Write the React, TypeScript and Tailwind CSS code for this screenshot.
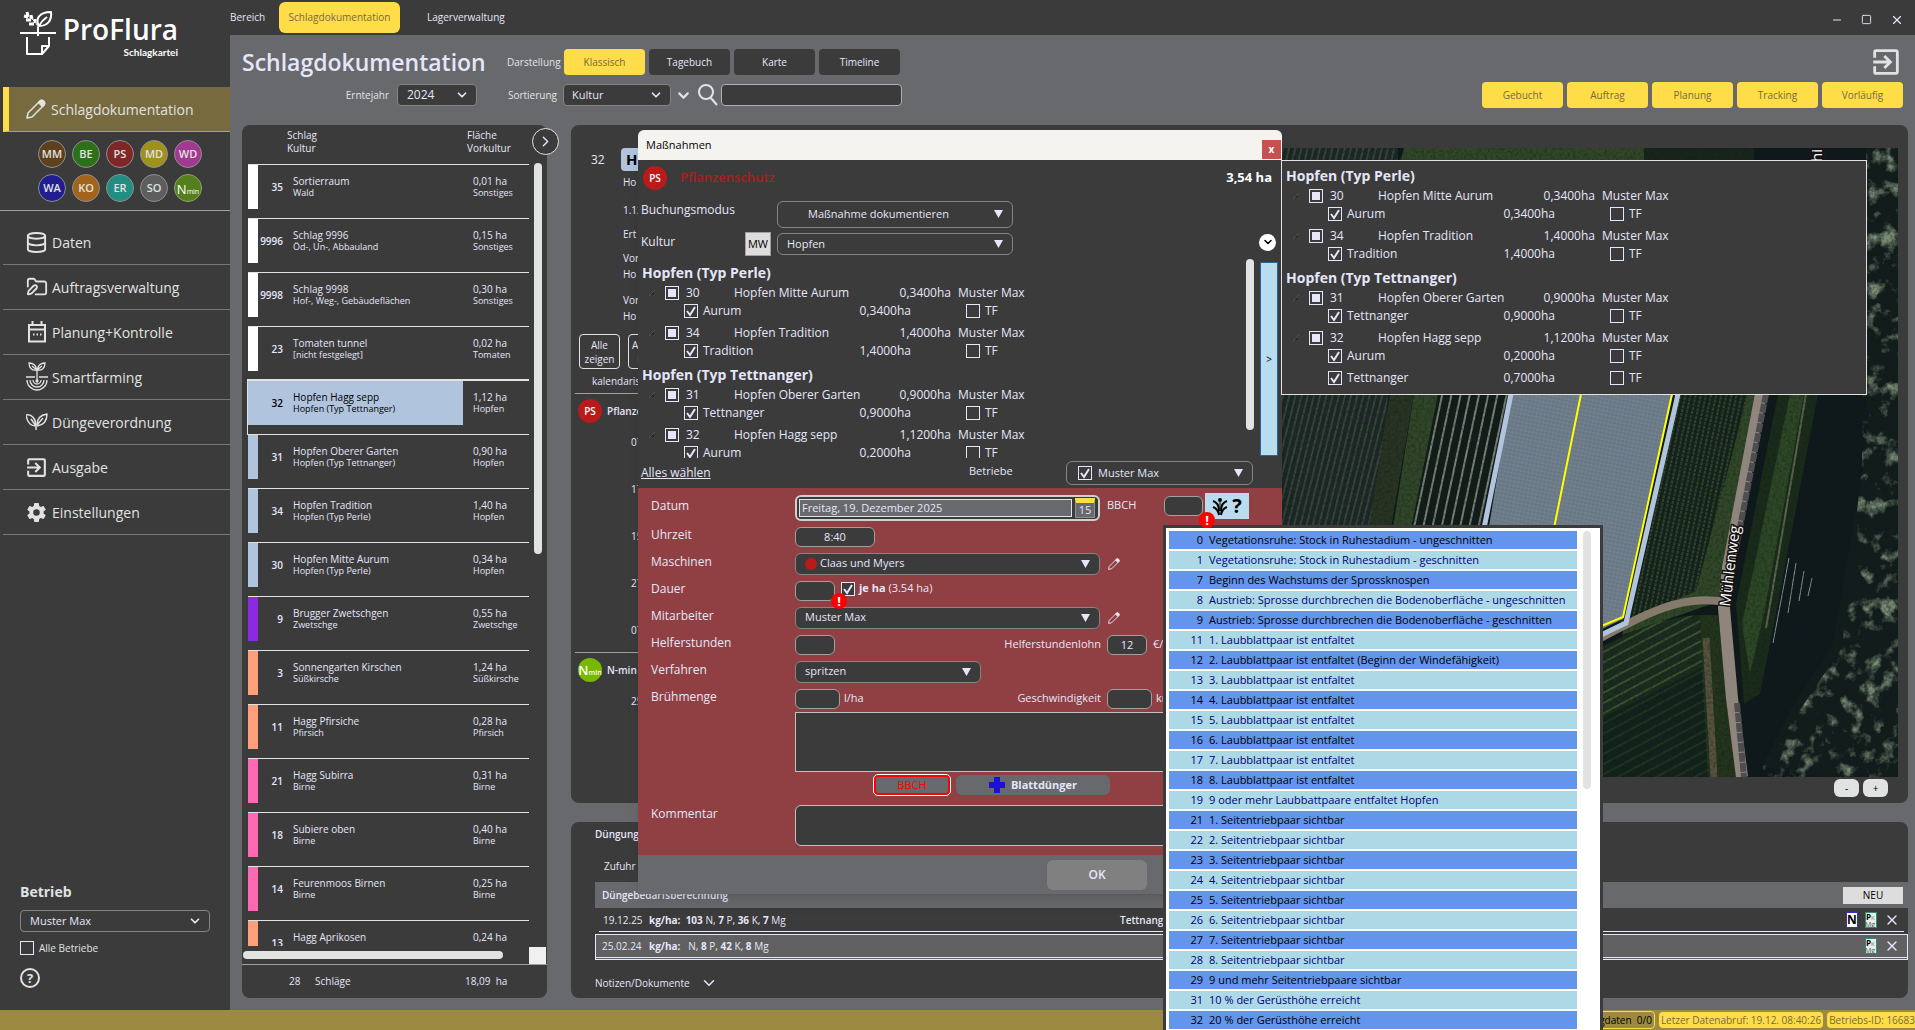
import React from 'react';
import { Database, FolderPen, ChevronDown, ChevronRight, X, Minus, Square } from 'lucide-react';
import { MdExitToApp } from 'react-icons/md';
import { IoSettingsSharp } from 'react-icons/io5';

const badges = [
  { label: 'MM', color: 'bg-[#5f401c]' },
  { label: 'BE', color: 'bg-[#2c711a]' },
  { label: 'PS', color: 'bg-[#7f2727]' },
  { label: 'MD', color: 'bg-[#9f911b]' },
  { label: 'WD', color: 'bg-[#a2388f]' },
  { label: 'WA', color: 'bg-[#231d92]' },
  { label: 'KO', color: 'bg-[#a2631a]' },
  { label: 'ER', color: 'bg-[#228d82]' },
  { label: 'SO', color: 'bg-[#5e5e5e]' },
];

const fields = [
  { id: 35, name: 'Sortierraum', crop: 'Wald', area: '0,01 ha', prev: 'Sonstiges', color: 'bg-white' },
  { id: 9996, name: 'Schlag 9996', crop: 'Öd-, Un-, Abbauland', area: '0,15 ha', prev: 'Sonstiges', color: 'bg-white' },
  { id: 9998, name: 'Schlag 9998', crop: 'Hof-, Weg-, Gebäudeflächen', area: '0,30 ha', prev: 'Sonstiges', color: 'bg-white' },
  { id: 23, name: 'Tomaten tunnel', crop: '[nicht festgelegt]', area: '0,02 ha', prev: 'Tomaten', color: 'bg-white' },
  { id: 32, name: 'Hopfen Hagg sepp', crop: 'Hopfen (Typ Tettnanger)', area: '1,12 ha', prev: 'Hopfen', color: 'bg-[#b0c4de]', selected: true },
  { id: 31, name: 'Hopfen Oberer Garten', crop: 'Hopfen (Typ Tettnanger)', area: '0,90 ha', prev: 'Hopfen', color: 'bg-[#b0c4de]' },
  { id: 34, name: 'Hopfen Tradition', crop: 'Hopfen (Typ Perle)', area: '1,40 ha', prev: 'Hopfen', color: 'bg-[#b0c4de]' },
  { id: 30, name: 'Hopfen Mitte Aurum', crop: 'Hopfen (Typ Perle)', area: '0,34 ha', prev: 'Hopfen', color: 'bg-[#b0c4de]' },
  { id: 9, name: 'Brugger Zwetschgen', crop: 'Zwetschge', area: '0,55 ha', prev: 'Zwetschge', color: 'bg-[#8a2be2]' },
  { id: 3, name: 'Sonnengarten Kirschen', crop: 'Süßkirsche', area: '1,24 ha', prev: 'Süßkirsche', color: 'bg-[#ffa07a]' },
  { id: 11, name: 'Hagg Pfirsiche', crop: 'Pfirsich', area: '0,28 ha', prev: 'Pfirsich', color: 'bg-[#ffa07a]' },
  { id: 21, name: 'Hagg Subirra', crop: 'Birne', area: '0,31 ha', prev: 'Birne', color: 'bg-[#ff69b4]' },
  { id: 18, name: 'Subiere oben', crop: 'Birne', area: '0,40 ha', prev: 'Birne', color: 'bg-[#ff69b4]' },
  { id: 14, name: 'Feurenmoos Birnen', crop: 'Birne', area: '0,25 ha', prev: 'Birne', color: 'bg-[#ff69b4]' },
  { id: 13, name: 'Hagg Aprikosen', crop: '', area: '0,24 ha', prev: '', color: 'bg-[#ffa07a]' },
];

const tree = [
  {
    title: 'Hopfen (Typ Perle)',
    plots: [
      { id: 30, name: 'Hopfen Mitte Aurum', area: '0,3400ha', parts: [['Aurum', '0,3400ha']] },
      { id: 34, name: 'Hopfen Tradition', area: '1,4000ha', parts: [['Tradition', '1,4000ha']] },
    ],
  },
  {
    title: 'Hopfen (Typ Tettnanger)',
    plots: [
      { id: 31, name: 'Hopfen Oberer Garten', area: '0,9000ha', parts: [['Tettnanger', '0,9000ha']] },
      { id: 32, name: 'Hopfen Hagg sepp', area: '1,1200ha', parts: [['Aurum', '0,2000ha'], ['Tettnanger', '0,7000ha']] },
    ],
  },
];

const stages: [number, string][] = [
  [0, 'Vegetationsruhe: Stock in Ruhestadium - ungeschnitten'],
  [1, 'Vegetationsruhe: Stock in Ruhestadium - geschnitten'],
  [7, 'Beginn des Wachstums der Sprossknospen'],
  [8, 'Austrieb: Sprosse durchbrechen die Bodenoberfläche - ungeschnitten'],
  [9, 'Austrieb: Sprosse durchbrechen die Bodenoberfläche - geschnitten'],
  [11, '1. Laubblattpaar ist entfaltet'],
  [12, '2. Laubblattpaar ist entfaltet (Beginn der Windefähigkeit)'],
  [13, '3. Laubblattpaar ist entfaltet'],
  [14, '4. Laubblattpaar ist entfaltet'],
  [15, '5. Laubblattpaar ist entfaltet'],
  [16, '6. Laubblattpaar ist entfaltet'],
  [17, '7. Laubblattpaar ist entfaltet'],
  [18, '8. Laubblattpaar ist entfaltet'],
  [19, '9 oder mehr Laubbattpaare entfaltet Hopfen'],
  [21, '1. Seitentriebpaar sichtbar'],
  [22, '2. Seitentriebpaar sichtbar'],
  [23, '3. Seitentriebpaar sichtbar'],
  [24, '4. Seitentriebpaar sichtbar'],
  [25, '5. Seitentriebpaar sichtbar'],
  [26, '6. Seitentriebpaar sichtbar'],
  [27, '7. Seitentriebpaar sichtbar'],
  [28, '8. Seitentriebpaar sichtbar'],
  [29, '9 und mehr Seitentriebpaare sichtbar'],
  [31, '10 % der Gerüsthöhe erreicht'],
  [32, '20 % der Gerüsthöhe erreicht'],
];

function Logo() {
  return (
    <svg width="36" height="44" viewBox="0 0 36 44" fill="none" stroke="white" strokeWidth="2" strokeLinejoin="round">
      <path d="M0 22h36" />
      <path d="M18 25V16" />
      <path d="M19 15c-4-7 0-14 12-14c1 8-3 14-12 14zM19 15c2-4 5-7 8-9" />
      <path d="M18 16C16 11 12 7 6 4" strokeWidth="1" />
      <path d="M7 1l1 4M4 5l4 1M11 4l1 4M6 9l5 0M15 8l0 4M9 13l5 0" strokeWidth="3" />
      <path d="M7 26v17h15l7-8v-9" />
      <path d="M22 43v-8h7" />
    </svg>
  );
}

function PencilIcon({ size }: { size: number }) {
  return (
    <svg width={size} height={size} viewBox="0 0 20 20" fill="none" stroke="currentColor" strokeWidth="1.5" strokeLinejoin="round">
      <path d="M1 19l1-5L14 2c2-2 6 1 4 4L6 18z" />
      <path d="M12.500 3.500l4 4L18 6c2-3-2-6-4-4z" fill="currentColor" />
    </svg>
  );
}

function SearchIcon() {
  return (
    <svg width="20" height="22" viewBox="0 0 20 22" fill="none" stroke="currentColor" strokeWidth="2">
      <circle cx="8" cy="8" r="7" />
      <path d="M12 13l7 8" />
    </svg>
  );
}

function CalendarIcon() {
  return (
    <svg width="20" height="22" viewBox="0 0 20 22" fill="none" stroke="currentColor" strokeWidth="2">
      <path d="M2 4h16v16.500H2zM2 8.500h16M5.500 0v4M14.500 0v4" />
      <path d="M6 13.500h1.500M9.500 13.500H11M13 13.500h1.500" />
    </svg>
  );
}

function SmartIcon() {
  return (
    <svg width="22" height="30" viewBox="0 0 22 30" fill="none" stroke="currentColor" strokeWidth="1.300">
      <path d="M11 19V8M11 8C10 3 7 1 3 1c0 5 3 8 8 7zM11 8c1-5 4-7 8-7c0 5-3 8-8 7zM11 8L6 4M11 8l5-4" />
      <path d="M0 15h9M13 15h9M1 18a10 10 0 0 0 20 0M4 18a7 7 0 0 0 14 0M7 18a4 4 0 0 0 8 0" />
      <circle cx="11" cy="19" r="1" fill="currentColor" />
    </svg>
  );
}

function LeavesIcon() {
  return (
    <svg width="22" height="18" viewBox="0 0 22 18" fill="none" stroke="currentColor" strokeWidth="1.500" strokeLinejoin="round">
      <path d="M10 17v-4C4 13 1 8 0 2c6-1 10 4 10 11" />
      <path d="M11 12c0-6 3-10 10-11c0 7-3 11-10 12M10 13L5 6M11 12l6-7" />
    </svg>
  );
}

function NminMark({ bright = false }: { bright?: boolean }) {
  return (
    <span className={`flex items-baseline justify-center rounded-full text-white ${bright ? 'h-6 w-6 bg-[#76b900] leading-6' : 'h-7 w-7 border border-[#8aa56a] bg-[#557f1c] leading-7'}`}>
      <span className="text-[13px]">N</span>
      <span className="text-[7px]">min</span>
    </span>
  );
}

interface CheckProps {
  state?: 'on' | 'off' | 'part';
  label?: string;
}

function Check({ state = 'off', label }: CheckProps) {
  return (
    <span className="relative flex h-[14px] w-[14px] shrink-0">
      <input
        type="checkbox"
        aria-label={label}
        defaultChecked={state === 'on'}
        className="h-[14px] w-[14px] appearance-none border border-[#e6e6fa] bg-[#3b3b3b]"
      />
      {state === 'on' && (
        <svg className="pointer-events-none absolute inset-0" viewBox="0 0 14 14" fill="none" stroke="#e6e6fa" strokeWidth="2">
          <path d="M3 7l3 4l5-8" />
        </svg>
      )}
      {state === 'part' && <span className="pointer-events-none absolute inset-[3px] bg-[#e6e6fa]" />}
    </span>
  );
}

interface DropdownProps {
  label: string;
  value: string;
  className: string;
  chevron?: boolean;
}

function Dropdown({ label, value, className, chevron = false }: DropdownProps) {
  return (
    <span className="relative flex shrink-0">
      <select aria-label={label} className={`appearance-none border border-[#858585] bg-[#3b3b3b] text-[#e6e6fa] ${className}`}>
        <option>{value}</option>
      </select>
      {chevron ? (
        <ChevronDown className="pointer-events-none absolute top-1 right-2 text-[#e6e6fa]" size={14} strokeWidth={3} />
      ) : (
        <svg className="pointer-events-none absolute inset-y-0 right-[10px] my-auto" width="9" height="8" viewBox="0 0 9 8">
          <path d="M0 0h9L4.500 8z" fill="#e6e6fa" />
        </svg>
      )}
    </span>
  );
}

function ErrorMark() {
  return (
    <span className="absolute -right-3 -bottom-2 z-10 flex h-4 w-4 items-center justify-center rounded-full bg-[#ff0000] text-[13px] leading-4 font-bold text-white">
      !
    </span>
  );
}

function PlotTree() {
  return (
    <div className="text-[12px] text-[#e6e6fa]">
      {tree.map((group) => (
        <section key={group.title} className="mb-[5px]">
          <h3 className="pl-1 text-[14px] leading-[22px] font-bold">{group.title}</h3>
          {group.plots.map((plot) => (
            <div key={plot.id}>
              <div className="flex h-[18px] items-center leading-[18px]">
                <span className="flex w-[27px] justify-center">
                  <svg width="6" height="6" viewBox="0 0 6 6"><path d="M6 0v6H0z" fill="#2a2a2a" stroke="#707070" strokeWidth="0.500" /></svg>
                </span>
                <label className="flex w-[69px] items-center gap-[7px]">
                  <Check state="part" />
                  {plot.id}
                </label>
                <span className="w-[137px] whitespace-nowrap">{plot.name}</span>
                <span className="w-20 text-right">{plot.area}</span>
                <span className="pl-[7px] whitespace-nowrap">Muster Max</span>
              </div>
              {plot.parts.map(([name, area]) => (
                <div key={name} className="mb-[5px] flex h-[17px] items-center pl-[46px] leading-[17px]">
                  <label className="flex w-[137px] items-center gap-[5px]">
                    <Check state="on" />
                    {name}
                  </label>
                  <span className="w-[90px] text-right">{area}</span>
                  <label className="ml-[55px] flex items-center gap-[5px]">
                    <Check />
                    TF
                  </label>
                </div>
              ))}
            </div>
          ))}
        </section>
      ))}
    </div>
  );
}

function Sidebar() {
  const items = [
    { label: 'Daten', icon: <Database size={23} strokeWidth={2} /> },
    { label: 'Auftragsverwaltung', icon: <FolderPen size={22} strokeWidth={2} /> },
    { label: 'Planung+Kontrolle', icon: <CalendarIcon /> },
    { label: 'Smartfarming', icon: <SmartIcon /> },
    { label: 'Düngeverordnung', icon: <LeavesIcon /> },
    { label: 'Ausgabe', icon: <MdExitToApp size={25} /> },
    { label: 'Einstellungen', icon: <IoSettingsSharp size={21} /> },
  ];
  return (
    <aside className="flex w-[230px] shrink-0 flex-col bg-[#3b3b3b] text-[#e0e3e1]">
      <div className="flex h-[87px] items-start pt-[11px] pl-5 text-white">
        <Logo />
        <div className="flex w-[122px] flex-col items-end">
          <span className="text-[28px] leading-[36px] font-semibold">ProFlura</span>
          <span className="font-['Lato'] text-[10px] leading-[10px] font-bold">Schlagkartei</span>
        </div>
      </div>
      <a href="#doku" className="ml-[3px] flex h-[45px] items-center border-b border-l-[6px] border-b-[#a0a0a0] border-l-[#fedd48] bg-[#776a3f] pl-[17px] text-[14px]">
        <span className="w-[25px]"><PencilIcon size={20} /></span>
        Schlagdokumentation
      </a>
      <div className="flex h-[79px] flex-wrap content-center gap-x-[6px] gap-y-[6px] border-b border-[#a0a0a0] pl-[38px]">
        {badges.map((b) => (
          <button key={b.label} className={`h-7 w-7 rounded-full border border-[#8f8f8f] text-[11px] font-semibold ${b.color}`}>{b.label}</button>
        ))}
        <button aria-label="N-min"><NminMark /></button>
      </div>
      <nav className="ml-[3px] pt-[9px]">
        {items.map((item) => (
          <a key={item.label} href={`#${item.label}`} className="flex h-[45px] items-center gap-[2px] border-b border-[#777777] pl-[20px] text-[14px]">
            <span className="flex w-[27px] justify-center">{item.icon}</span>
            {item.label}
          </a>
        ))}
      </nav>
      <div className="mt-auto flex flex-col items-start pb-[22px] pl-5">
        <h2 className="mb-2 text-[14px] leading-5 font-bold">Betrieb</h2>
        <Dropdown label="Betrieb" value="Muster Max" chevron className="h-[22px] w-[190px] rounded px-[9px] text-[11px]" />
        <label className="mt-2 flex items-center gap-[5px] text-[10px] leading-4">
          <Check />
          Alle Betriebe
        </label>
        <button aria-label="Hilfe" className="mt-3 flex h-5 w-5 items-center justify-center rounded-full border-2 border-[#e0e3e1] text-[13px] leading-none font-bold">?</button>
      </div>
    </aside>
  );
}

function TopBar() {
  return (
    <header className="flex h-[35px] shrink-0 items-center bg-[#3b3b3b] text-[10px] text-[#e6e6fa]">
      <span className="w-[49px]">Bereich</span>
      <button className="h-[31px] w-[121px] rounded-md bg-[#fedd48] text-[#776a3f]">Schlagdokumentation</button>
      <button className="ml-[27px]">Lagerverwaltung</button>
      <div className="ml-auto flex items-center gap-[18px] pt-1 pr-[11px]">
        <button aria-label="Minimieren"><Minus size={12} /></button>
        <button aria-label="Maximieren"><Square size={11} /></button>
        <button aria-label="Schließen"><X size={14} /></button>
      </div>
    </header>
  );
}

function Toolbar() {
  return (
    <div className="flex h-[90px] shrink-0 justify-between pl-3 text-[10px] text-[#e0e3e1]">
      <div className="pt-[11px]">
        <div className="flex h-8 items-center">
          <h1 className="w-[265px] text-[23px] leading-8 font-semibold text-[#e6e6fa]">Schlagdokumentation</h1>
          <span className="w-[57px]">Darstellung</span>
          <div className="flex gap-1">
            <button className="h-[26px] w-[81px] rounded bg-[#fedd48] text-[#776a3f]">Klassisch</button>
            {['Tagebuch', 'Karte', 'Timeline'].map((view) => (
              <button key={view} className="h-[26px] w-[81px] rounded bg-[#3b3b3b] text-[#e6e6fa]">{view}</button>
            ))}
          </div>
        </div>
        <div className="mt-[6px] flex h-[22px] items-center">
          <span className="w-[155px] pr-2 text-right">Erntejahr</span>
          <Dropdown label="Erntejahr" value="2024" chevron className="h-[22px] w-20 rounded px-[9px] text-[12px]" />
          <span className="w-[86px] pr-[6px] text-right">Sortierung</span>
          <Dropdown label="Sortierung" value="Kultur" chevron className="h-[22px] w-[108px] rounded px-2 text-[11px]" />
          <button aria-label="Aufklappen" className="ml-1"><ChevronDown size={17} strokeWidth={3} /></button>
          <span className="mr-[3px] ml-[6px]"><SearchIcon /></span>
          <input aria-label="Suche" className="h-[22px] w-[181px] rounded border border-[#b0b0b0] bg-[#3b3b3b]" />
        </div>
      </div>
      <div className="flex flex-col items-end pt-[10px] pr-3">
        <button aria-label="Abmelden"><MdExitToApp size={34} /></button>
        <div className="mt-[3px] flex gap-1">
          {['Gebucht', 'Auftrag', 'Planung', 'Tracking', 'Vorläufig'].map((filter) => (
            <button key={filter} className="h-[26px] w-[81px] rounded bg-[#fedd48] text-[#776a3f]">{filter}</button>
          ))}
        </div>
      </div>
    </div>
  );
}

function FieldList() {
  return (
    <section className="relative flex w-[305px] shrink-0 flex-col rounded-lg bg-[#3b3b3b] text-[10px] text-[#e6e6fa]">
      <div className="flex min-h-0 flex-1">
        <div className="min-h-0 overflow-hidden pl-[6px]">
          <table className="w-[281px] table-fixed border-separate border-spacing-0">
            <thead>
              <tr className="h-[39px] text-left align-top leading-[13px]">
                <th className="w-[10px]" />
                <th className="w-[25px]" />
                <th className="w-[180px] pt-1 pl-1 font-normal">Schlag<br />Kultur</th>
                <th className="w-[66px] pt-1 pl-1 font-normal">Fläche<br />Vorkultur</th>
              </tr>
            </thead>
            <tbody>
              {fields.map((f) => {
                const box = f.selected ? 'bg-[#b0c4de] text-black' : '';
                return (
                  <tr key={f.id} className={`h-[54px] align-top leading-3 ${f.selected ? 'outline outline-[#e0e3e1]' : ''}`}>
                    <td className="border-t border-[#e0e3e1] p-0"><div className={`h-[44px] ${f.color}`} /></td>
                    <td className="border-t border-[#e0e3e1] p-0">
                      <div className={`flex h-[44px] items-center justify-end font-semibold ${box}`}>{f.id}</div>
                    </td>
                    <td className="border-t border-[#e0e3e1] p-0">
                      <div className={`flex h-[44px] flex-col justify-center pl-[10px] whitespace-nowrap ${box}`}>
                        <span className="h-3 font-medium">{f.name}</span>
                        <span className="h-3 text-[9px]">{f.crop}</span>
                      </div>
                    </td>
                    <td className="border-t border-[#e0e3e1] p-0">
                      <div className="flex h-[44px] flex-col justify-center pl-[10px]">
                        <span className="h-3">{f.area}</span>
                        <span className="h-3 text-[9px]">{f.prev}</span>
                      </div>
                    </td>
                  </tr>
                );
              })}
            </tbody>
          </table>
        </div>
        <div className="mt-[38px] ml-[5px] h-[391px] w-2 rounded bg-[#e0e3e1]" />
      </div>
      <div className="flex h-[18px] items-center justify-between pr-px pl-px">
        <div className="h-2 w-[260px] rounded bg-[#e0e3e1]" />
        <div className="h-[17px] w-[17px] bg-[#f0f0f0]" />
      </div>
      <div className="flex h-[34px] items-center border-t border-[#a0a0a0] pl-[47px]">
        <span className="w-[26px]">28</span>
        <span className="w-[150px]">Schläge</span>
        <span className="whitespace-pre">18,09  ha</span>
      </div>
      <button aria-label="Liste einklappen" className="absolute top-[3px] -right-3 flex h-[27px] w-[27px] items-center justify-center rounded-full border border-[#e0e3e1] bg-[#3b3b3b]">
        <ChevronRight size={17} strokeWidth={2} />
      </button>
    </section>
  );
}

// Aerial view of the selected field with its outline and the sub-plot lines
function FieldMap() {
  return (
    <svg className="h-full w-full" viewBox="0 0 616 629" preserveAspectRatio="xMidYMid slice">
      <defs>
        <filter id="grain" x="0" y="0" width="100%" height="100%">
          <feTurbulence type="fractalNoise" baseFrequency="0.35" numOctaves="3" seed="4" />
          <feColorMatrix values="0 0 0 0 0  0 0 0 0 0.02  0 0 0 0 0  1.800 0 0 0 -0.700" />
        </filter>
        <filter id="leaves" x="0" y="0" width="100%" height="100%">
          <feTurbulence type="fractalNoise" baseFrequency="0.06" numOctaves="5" seed="9" />
          <feColorMatrix values="0 0 0 0 0.200  0 0 0 0 0.260  0 0 0 0 0.190  4 0 0 0 -2.100" />
          <feComposite in2="SourceGraphic" operator="in" />
        </filter>
        <pattern id="rows" width="6" height="6" patternUnits="userSpaceOnUse" patternTransform="rotate(14)">
          <rect width="6" height="6" fill="#1f2728" />
          <path d="M1 0v6" stroke="#39433f" strokeWidth="2" />
        </pattern>
        <pattern id="wideRows" width="9" height="9" patternUnits="userSpaceOnUse" patternTransform="rotate(12)">
          <rect width="9" height="9" fill="#151b1c" />
          <path d="M1 0v9" stroke="#7b827b" strokeWidth="2" />
        </pattern>
        <pattern id="vine" width="5" height="4" patternUnits="userSpaceOnUse" patternTransform="rotate(12)">
          <rect width="5" height="4" fill="#17211f" />
          <path d="M1 0v3" stroke="#33452f" strokeWidth="2" />
        </pattern>
        <pattern id="hops" width="4" height="4" patternUnits="userSpaceOnUse" patternTransform="rotate(12)">
          <rect width="4" height="4" fill="#687785" />
          <path d="M0 0v4M0 2h4" stroke="#76848f" strokeWidth="1" />
        </pattern>
        <pattern id="green" width="8" height="9" patternUnits="userSpaceOnUse" patternTransform="rotate(-28)">
          <rect width="8" height="9" fill="#1d2b21" />
          <path d="M0 2h8" stroke="#3b5232" strokeWidth="2" />
        </pattern>
      </defs>
      <rect width="616" height="629" fill="#11171e" />
      <path d="M0 0h116L90 629H0z" fill="url(#rows)" />
      <path d="M122 0h240v14H118zM132 246h26l-26 140h-22z" fill="#33452b" />
      <path d="M108 246h24l-24 140H86z" fill="#2b3226" />
      <path d="M362 0h110v14H362z" fill="#1a231f" />
      <path d="M156 246h74l-28 140h-74z" fill="url(#wideRows)" />
      <path d="M396 246h80l-40 200l-100 35z" fill="url(#vine)" />
      <path d="M466 246h12l-34 205l-104 36l4-14l70-30z" fill="#33462b" />
      <path d="M300 510c40-22 70-40 118-43l14 162H300z" fill="url(#green)" />
      <path d="M300 580l120-60l6 109H300z" fill="#0f1a1e" opacity="0.550" />
      <path d="M418 467h18l20 162h-30z" fill="#25331f" />
      <path d="M424 490l8 139" stroke="#5a5240" strokeWidth="7" />
      <path d="M496 246h40l-46 240l-12 60l-16 10l-8-100z" fill="#1c2a1d" />
      <path d="M508 246h14l-40 220l-14 60l-8-50z" fill="#2f4628" />
      <path d="M524 246L484 480" stroke="#5d6552" strokeWidth="2" fill="none" />
      <path d="M507 410l-16 85M514 415l-8 50M522 423l-5 30M530 430l-4 18" stroke="#8c959c" strokeWidth="1" />
      <path d="M584 0h32v629H540l-60-10l30-60l40-60l35-200z" fill="#18201f" opacity="0.500" />
      <path d="M584 0h32v629H474l46-70l40-60l20-180z" fill="#fff" filter="url(#leaves)" />
      <path d="M0 0h616v629H0z" fill="#000" filter="url(#grain)" opacity="0.500" />
      <path d="M229 246h162l-50 225l-21 10H190z" fill="url(#hops)" />
      <path d="M479 246L446 420L442 460L450 550L460 629" stroke="#8f857c" strokeWidth="12" fill="none" />
      <path d="M484 246L453 405M455 555L462 629" stroke="#4e4e51" strokeWidth="6" strokeDasharray="9 1" fill="none" />
      <path d="M444 454C400 446 370 462 300 500" stroke="#857a6c" strokeWidth="8" fill="none" />
      <path d="M229 246L190 440M396 246L344 475L300 496" stroke="#b0c4de" strokeWidth="5" fill="none" />
      <path d="M299 246L262 430M390 246L341 469L310 482" stroke="#ffff00" strokeWidth="2" fill="none" />
      <rect x="526" y="0" width="18" height="14" fill="#15171b" />
      <g fontSize="15" fill="#fff" stroke="#111" strokeWidth="3" paintOrder="stroke">
        <text transform="translate(540 14) rotate(-90)">hi</text>
        <text transform="translate(448 459) rotate(-83)">Mühlenweg</text>
      </g>
    </svg>
  );
}

function FieldDetails() {
  const booked = ['07.', '17.', '15.', '27.', '07.'];
  return (
    <section className="flex min-h-0 flex-1 rounded-lg bg-[#3b3b3b] text-[10px] leading-4 text-[#e6e6fa]">
      <div className="flex w-[711px] shrink-0 flex-col pt-[23px]">
        <div className="flex h-[23px] items-center pl-5">
          <span className="w-[30px] text-[12px]">32</span>
          <span className="rounded bg-[#b0c4de] px-[5px] text-[15px] leading-[23px] font-bold text-black">H</span>
        </div>
        <div className="flex flex-col pt-[3px] pl-[52px]">
          <span>Ho</span>
          <span className="mt-3">1.12</span>
          <span className="mt-2">Ert</span>
          <span className="mt-2">Vor</span>
          <span>Ho</span>
          <span className="mt-[10px]">Vor</span>
          <span>Ho</span>
        </div>
        <div className="mt-[10px] flex gap-2 pl-2 leading-[14px]">
          <button className="h-[35px] w-[41px] rounded border border-[#e0e3e1]">Alle zeigen</button>
          <button className="h-[35px] w-[41px] rounded border border-[#e0e3e1] pl-[3px] text-left">A<br />&nbsp; B</button>
        </div>
        <span className="mt-1 pl-[21px]">kalendaris</span>
        <div className="mt-1 ml-1 flex h-[35px] items-center gap-[5px] border-t border-[#a0a0a0] pl-[3px] font-semibold">
          <span className="flex h-6 w-6 items-center justify-center rounded-full bg-[#bb1a1a] text-white">PS</span>
          Pflanze
        </div>
        <div className="flex flex-col gap-[31px] pt-[6px] pl-[60px]">
          {booked.map((date, index) => (
            <span key={index}>{date}</span>
          ))}
        </div>
        <div className="mt-[14px] ml-1 flex h-[35px] items-center gap-[5px] border-t border-[#a0a0a0] pl-[3px] font-semibold">
          <NminMark bright />
          N-min
        </div>
        <span className="pt-[6px] pl-[60px]">25.</span>
      </div>
      <div className="flex min-w-0 flex-1 flex-col pt-[23px] pr-[10px]">
        <div className="min-h-0 flex-1"><FieldMap /></div>
        <div className="flex h-[26px] justify-end gap-1 pt-[2px] pr-[10px] text-black">
          <button className="h-[18px] w-[25px] rounded-md bg-[#e0e3e1] leading-4">-</button>
          <button className="h-[18px] w-[25px] rounded-md bg-[#e0e3e1] leading-4">+</button>
        </div>
      </div>
    </section>
  );
}

function PkIcon() {
  return (
    <svg width="12" height="16" viewBox="0 0 12 16">
      <rect width="12" height="16" fill="#2c9071" />
      <rect x="1" y="1" width="10" height="14" fill="#e6efe9" />
      <text x="1" y="8" fontSize="8" fontWeight="700">P</text>
      <text x="6" y="8" fontSize="6" fill="#777">K</text>
      <text x="0" y="15" fontSize="7" fill="#555">Mg</text>
    </svg>
  );
}

function Fertilizing() {
  return (
    <section className="flex h-[176px] shrink-0 flex-col rounded-lg bg-[#3b3b3b] pl-6 text-[10px] leading-4 text-[#e6e6fa]">
      <span className="mt-1 font-semibold">Düngung</span>
      <span className="mt-4 pl-[9px]">Zufuhr -</span>
      <div className="mt-2 flex h-[26px] shrink-0 items-center justify-between bg-[#68696d] pr-[5px] pl-[7px] font-semibold">
        Düngebedarfsberechnung
        <button className="h-[17px] w-[60px] bg-[#dddddd] font-normal text-black">NEU</button>
      </div>
      <div className="mr-1 ml-1 flex h-[24px] shrink-0 items-center border-b border-[#e6e6fa] pl-1">
        <span className="w-[46px]">19.12.25</span>
        <span className="w-[471px]"><b>kg/ha:</b> &nbsp;<b>103</b> N, <b>7</b> P, <b>36</b> K, <b>7</b> Mg</span>
        <span className="font-semibold">Tettnange</span>
        <span className="mr-1 ml-auto flex items-center gap-[7px]">
          <svg width="12" height="16" viewBox="0 0 12 16">
            <rect width="12" height="16" fill="#3a30c0" />
            <rect x="1" y="1" width="10" height="14" fill="#fff" />
            <text x="1" y="12" fontSize="12" fontWeight="700">N</text>
          </svg>
          <PkIcon />
          <button aria-label="Löschen"><X size={16} /></button>
        </span>
      </div>
      <div className="mt-[2px] flex h-[26px] shrink-0 items-center border border-b-[3px] border-double border-[#e6e6fa] bg-[#606060] pl-[6px]">
        <span className="w-[47px]">25.02.24</span>
        <span><b>kg/ha:</b> &nbsp; N, <b>8</b> P, <b>42</b> K, <b>8</b> Mg</span>
        <span className="mr-[7px] ml-auto flex items-center gap-[7px]">
          <PkIcon />
          <button aria-label="Löschen"><X size={16} /></button>
        </span>
      </div>
      <button className="mt-[14px] flex items-center gap-[10px] font-medium">
        Notizen/Dokumente
        <ChevronDown size={18} />
      </button>
    </section>
  );
}

function StatusBar() {
  return (
    <footer className="flex h-5 shrink-0 items-center justify-end gap-1 overflow-hidden bg-[#9b8a3f] text-[10px] whitespace-nowrap">
      <span className="rounded-sm border border-[#fedd48] px-[2px] leading-4 text-black">Logdaten&nbsp; 0/0</span>
      <span className="rounded-sm bg-[#fedd48] px-[2px] leading-4 text-[#776a3f]">Letzer Datenabruf: 19.12. 08:40:26</span>
      <span className="rounded-l-sm bg-[#fedd48] pl-[2px] leading-4 text-[#776a3f]">Betriebs-ID: 16683</span>
    </footer>
  );
}

const inputStyle = 'rounded-md border border-[#a0a0a0] bg-[#3b3b3b] text-center text-[#e6e6fa]';

interface RowProps {
  label: string;
  children: React.ReactNode;
}

function Row({ label, children }: RowProps) {
  return (
    <div className="flex h-[27px] items-center">
      <span className="w-36 shrink-0 pb-1 text-[12px]">{label}</span>
      {children}
    </div>
  );
}

function MeasureForm() {
  return (
    <form className="h-[367px] bg-[#904042] pt-[6px] pl-[13px] text-[11px] text-[#e6e6fa]">
      <div className="mb-[2px]">
        <Row label="Datum">
          <div className="flex h-[26px] w-[305px] items-center gap-[3px] rounded-md border-2 border-[#d0d0d0] bg-[#3b3b3b] px-[2px]">
            <input aria-label="Datum" defaultValue="Freitag, 19. Dezember 2025" className="h-[18px] w-[273px] border border-[#e0e3e1] bg-[#68696d] px-[2px]" />
            <button type="button" aria-label="Kalender" className="h-5 w-5 border border-[#909090] border-t-[5px] border-t-[#fedd48] bg-[#68696d] leading-[13px]">15</button>
          </div>
          <span className="w-16 pb-1 pl-[7px]">BBCH</span>
          <span className="relative flex pb-1">
            <input aria-label="BBCH" className={`h-5 w-[39px] ${inputStyle}`} />
            <ErrorMark />
          </span>
          <button type="button" aria-label="Stadium suchen" className="mb-1 ml-[2px] flex h-[26px] w-11 items-center justify-center gap-1 bg-[#b9dcee] text-black">
            <svg width="16" height="20" viewBox="0 0 16 20" fill="none" stroke="black" strokeWidth="2">
              <path d="M8 18V6" strokeWidth="1" />
              <path d="M7 19C6 14 4 12 1 11M9 19c1-5 3-7 6-8M7 15C7 9 4 6 1 5M9 15c0-6 3-9 6-10" />
              <circle cx="8" cy="4" r="2" fill="black" stroke="none" />
            </svg>
            <span className="text-[20px] leading-none font-bold">?</span>
          </button>
        </Row>
      </div>
      <Row label="Uhrzeit">
        <input aria-label="Uhrzeit" defaultValue="8:40" className={`h-5 w-20 ${inputStyle}`} />
      </Row>
      <Row label="Maschinen">
        <span className="relative flex">
          <Dropdown label="Maschinen" value="Claas und Myers" className="h-[22px] w-[305px] rounded-md pl-6" />
          <span className="pointer-events-none absolute top-[5px] left-[10px] h-3 w-3 rounded-full bg-[#bb1a1a]" />
        </span>
        <button type="button" aria-label="Maschinen bearbeiten" className="ml-2"><PencilIcon size={12} /></button>
      </Row>
      <Row label="Dauer">
        <span className="relative flex">
          <input aria-label="Dauer" className={`h-5 w-10 ${inputStyle}`} />
          <ErrorMark />
        </span>
        <label className="flex items-center gap-1 pb-1 pl-[6px]">
          <Check state="on" />
          <span><b>je ha</b> (3.54 ha)</span>
        </label>
      </Row>
      <Row label="Mitarbeiter">
        <Dropdown label="Mitarbeiter" value="Muster Max" className="h-[22px] w-[305px] rounded-md pl-[9px]" />
        <button type="button" aria-label="Mitarbeiter bearbeiten" className="ml-2"><PencilIcon size={12} /></button>
      </Row>
      <Row label="Helferstunden">
        <input aria-label="Helferstunden" className={`h-5 w-10 ${inputStyle}`} />
        <span className="w-[272px] pr-[6px] text-right">Helferstundenlohn</span>
        <input aria-label="Helferstundenlohn" defaultValue="12" className={`h-5 w-10 ${inputStyle}`} />
        <span className="pl-[6px]">€/h</span>
      </Row>
      <Row label="Verfahren">
        <Dropdown label="Verfahren" value="spritzen" className="h-[22px] w-[186px] rounded-md pl-[9px]" />
      </Row>
      <Row label="Brühmenge">
        <input aria-label="Brühmenge" className={`h-5 w-[45px] ${inputStyle}`} />
        <span className="flex w-[267px] justify-between pr-[6px] pl-1"><span>l/ha</span><span>Geschwindigkeit</span></span>
        <input aria-label="Geschwindigkeit" className={`h-5 w-[45px] ${inputStyle}`} />
        <span className="pl-1">km/h</span>
      </Row>
      <textarea aria-label="Mittel" className="ml-36 block h-[60px] w-[470px] resize-none border border-[#c0c0c0] bg-[#3b3b3b]" />
      <div className="mt-[2px] ml-[223px] flex h-[22px] items-center gap-[6px]">
        <button type="button" className="h-[20px] w-[76px] rounded border-2 border-[#ff0000] bg-[#68696d] leading-4 text-[#ff0000] outline outline-white">BBCH</button>
        <button type="button" className="flex h-5 w-[154px] items-center justify-center gap-[6px] rounded-md bg-[#68696d] font-bold">
          <svg width="16" height="16" viewBox="0 0 16 16"><path d="M5 0h6v5h5v6h-5v5H5v-5H0V5h5z" fill="#1c10d8" /></svg>
          Blattdünger
        </button>
      </div>
      <label className="mt-[9px] flex items-start">
        <span className="w-36 text-[12px]">Kommentar</span>
        <textarea className="h-[41px] w-[470px] resize-none rounded-md border border-[#c0c0c0] bg-[#3b3b3b]" />
      </label>
    </form>
  );
}

function MeasureDialog() {
  return (
    <div role="dialog" aria-label="Maßnahmen" className="absolute top-[130px] left-[638px] w-[644px] overflow-hidden rounded-t-md bg-[#3b3b3b] text-[11px] text-[#e6e6fa] shadow-lg">
      <div className="flex h-[30px] items-center justify-between bg-[#f5f3ef] pr-px pl-2 text-black">
        Maßnahmen
        <button aria-label="Schließen" className="mt-2 h-[19px] w-[19px] bg-[#c75050] text-[10px] leading-4 font-bold text-white">x</button>
      </div>
      <div className="flex h-9 items-center pr-[10px] pl-[5px]">
        <span className="flex h-6 w-6 items-center justify-center rounded-full bg-[#bb1a1a] text-[10px] font-semibold text-white">PS</span>
        <span className="pl-[13px] text-[13px] font-semibold text-[#b01c1c]">Pflanzenschutz</span>
        <span className="ml-auto text-[13px] font-bold text-white">3,54 ha</span>
      </div>
      <div className="flex h-9 items-center pl-[3px]">
        <span className="w-[136px] pb-2 text-[12px]">Buchungsmodus</span>
        <Dropdown label="Buchungsmodus" value="Maßnahme dokumentieren" className="h-[27px] w-[236px] rounded-md pl-[30px]" />
      </div>
      <div className="flex h-6 items-center pl-[3px]">
        <span className="w-[104px] pb-1 text-[12px]">Kultur</span>
        <button className="mr-[6px] h-6 w-[26px] border border-[#a0a0a0] bg-[#dddddd] text-black">MW</button>
        <Dropdown label="Kultur" value="Hopfen" className="h-[22px] w-[236px] rounded-md pl-[9px]" />
        <button aria-label="Ausklappen" className="mr-[6px] mb-1 ml-auto flex h-[17px] w-[17px] items-center justify-center rounded-full bg-white text-black">
          <ChevronDown size={12} strokeWidth={3} />
        </button>
      </div>
      <div className="flex h-[202px] overflow-hidden pt-[6px]">
        <div className="flex-1"><PlotTree /></div>
        <div className="-mt-[3px] mr-[6px] h-[171px] w-2 shrink-0 rounded bg-[#e0e3e1]" />
        <button aria-label="Übersicht öffnen" className="mr-1 h-[194px] w-[18px] border border-[#2a6496] bg-[#b9dcee] text-[10px] text-black">&gt;</button>
      </div>
      <div className="flex h-[30px] items-center pl-[3px]">
        <a href="#alle" className="w-[328px] text-[12px] underline">Alles wählen</a>
        <span className="w-[97px] pb-1">Betriebe</span>
        <span className="relative flex">
          <Dropdown label="Betriebe" value="Muster Max" className="h-6 w-[187px] rounded-md pl-[31px]" />
          <span className="absolute top-[5px] left-3"><Check state="on" label="Muster Max" /></span>
        </span>
      </div>
      <MeasureForm />
      <div className="flex h-[39px] items-center bg-[#68696d] pl-[409px]">
        <button className="h-[30px] w-[100px] rounded-md bg-[#808080] text-[12px] font-semibold">OK</button>
      </div>
    </div>
  );
}

function StageList() {
  return (
    <div className="absolute top-[525px] left-[1163px] flex w-[440px] gap-[6px] border-[3px] border-[#3b3b3b] bg-white pt-[3px] pr-[9px] pl-[3px]">
      <ul role="listbox" aria-label="BBCH Stadium" className="min-w-0 flex-1 text-[11px] leading-[18px]">
        {stages.map(([code, text], index) => (
          <li
            key={code}
            role="option"
            aria-selected={false}
            className={`mb-[2px] flex gap-[6px] whitespace-nowrap ${index % 2 ? 'bg-[#add8e6] text-[#000080]' : 'bg-[#6495ed] text-black'}`}
          >
            <span className="w-[34px] text-right">{code}</span>
            {text}
          </li>
        ))}
      </ul>
      <div className="h-[258px] w-2 rounded bg-[#e0e3e1]" />
    </div>
  );
}

function App() {
  return (
    <div className="relative flex h-screen flex-col overflow-hidden bg-[#68696d] font-['Open_Sans','Noto_Sans',sans-serif]">
      <div className="flex min-h-0 flex-1">
        <Sidebar />
        <div className="flex min-w-0 flex-1 flex-col">
          <TopBar />
          <Toolbar />
          <main className="flex min-h-0 flex-1 gap-6 pr-[7px] pb-3 pl-3">
            <FieldList />
            <div className="flex min-w-0 flex-1 flex-col gap-[19px]">
              <FieldDetails />
              <Fertilizing />
            </div>
          </main>
        </div>
      </div>
      <StatusBar />
      <MeasureDialog />
      <div className="absolute top-[160px] left-[1281px] h-[235px] w-[586px] border border-[#e0e3e1] bg-[#3b3b3b] pt-1">
        <PlotTree />
      </div>
      <StageList />
    </div>
  );
}

export default App;
